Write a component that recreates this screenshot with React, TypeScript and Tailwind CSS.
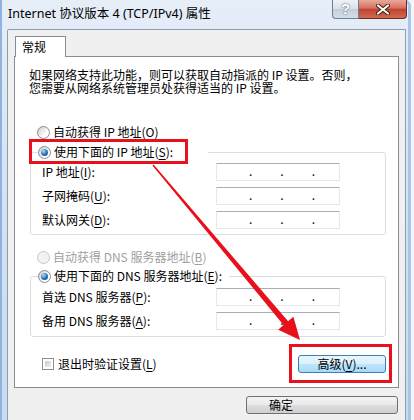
import type { ReactNode } from "react";

const Radio = ({ checked = false, disabled = false }: { checked?: boolean; disabled?: boolean }) => (
  <span
    className={
      disabled
        ? "flex h-[13px] w-[13px] shrink-0 items-center justify-center rounded-full border border-[#c9c9c9] bg-[#f2f2f2]"
        : "flex h-[13px] w-[13px] shrink-0 items-center justify-center rounded-full border border-[#8b8b8b] bg-[linear-gradient(135deg,#cdcdcd,#ffffff_70%)]"
    }
  >
    {checked && (
      <span className="h-[7px] w-[7px] rounded-full bg-[radial-gradient(circle_at_35%_30%,#a8e0fb,#2f79c2_50%,#0d3a6e)]" />
    )}
  </span>
);

const Option = ({
  checked,
  disabled,
  children,
}: {
  checked?: boolean;
  disabled?: boolean;
  children: ReactNode;
}) => (
  <div className={`flex h-[16px] items-center gap-[3px] ${disabled ? "text-[#a0a0a0]" : "text-black"}`}>
    <Radio checked={checked} disabled={disabled} />
    <span className="whitespace-nowrap leading-[16px]">{children}</span>
  </div>
);

const U = ({ c }: { c: string }) => (
  <span className="underline decoration-1 underline-offset-[2px]">{c}</span>
);

const IpField = () => (
  <div className="flex h-[18px] w-[124px] items-end border border-[#e3e9ef] border-t-[#abadb3] bg-white pb-[3px] text-[12px] leading-[12px] text-black">
    <span className="w-[32px]" />.<span className="w-[28px]" />.<span className="w-[28px]" />.
  </div>
);

const FieldRow = ({ label }: { label: ReactNode }) => (
  <div className="flex h-[18px] items-center">
    <span className="w-[174px] whitespace-nowrap">{label}</span>
    <IpField />
  </div>
);

const App = () => {
  return (
    <div className="relative h-[420px] w-[414px] overflow-hidden bg-[#f3f5f8] font-['Noto_Sans_CJK_SC','Noto_Sans',sans-serif] text-[12px] text-black">
      <div className="flex h-[420px] w-[411px] flex-col rounded-tr-[6px] bg-[linear-gradient(180deg,#e6eef8,#d6e4f3_40%,#c8dbf0)] shadow-[inset_2px_0_0_#8fb2df,inset_-3px_0_0_#a8c6ea]">
        {/* title bar */}
        <div className="flex h-[29px] items-start">
          <span className="pl-[8px] pt-[6px] font-['Noto_Sans','Noto_Sans_CJK_SC',sans-serif] text-[12.5px] leading-[16px] text-black">
            Internet 协议版本 4 (TCP/IPv4) 属性
          </span>
          <div className="ml-auto mr-[4px] flex">
            <div className="flex h-[19px] w-[27px] items-center justify-center rounded-bl-[4px] border border-t-0 border-[#6f7d90] bg-[linear-gradient(180deg,#eef3f8,#d7e0ea_50%,#c3cfdd_51%,#d3dde8)] font-['Liberation_Sans',sans-serif] text-[14px] font-bold leading-none text-white [text-shadow:0_0_2px_#3a4452]">
              ?
            </div>
            <div className="flex h-[19px] w-[48px] items-center justify-center rounded-br-[4px] border border-l-0 border-t-0 border-[#6b2a22] bg-[linear-gradient(180deg,#e9a99b,#d6705f_45%,#c0422f_52%,#d06a52)]">
              <svg width="14" height="11" viewBox="0 0 14 11">
                <path d="M2 1.5 L12 9.5 M12 1.5 L2 9.5" stroke="#3d1a15" strokeWidth="4" strokeLinecap="round" />
                <path d="M2 1.5 L12 9.5 M12 1.5 L2 9.5" stroke="#ffffff" strokeWidth="2.2" strokeLinecap="round" />
              </svg>
            </div>
          </div>
        </div>

        {/* client area */}
        <div className="ml-[7px] flex w-[399px] flex-1 flex-col rounded-tl-[2px] border-l border-r border-t border-[#8d9db1] bg-[#f0f0f0]">
          <div className="relative z-10 ml-[7px] mt-[6px] flex h-[21px] w-[51px] items-center border border-b-0 border-[#898c95] bg-white pl-[6px] leading-[14px]">
            常规
          </div>
          <div className="-mt-[1px] ml-[6px] flex h-[332px] w-[385px] flex-col border border-[#898c95] bg-white">
            <div className="pl-[14px] pt-[11px] leading-[13px]">
              <div className="whitespace-nowrap">如果网络支持此功能，则可以获取自动指派的 IP 设置。否则，</div>
              <div className="whitespace-nowrap">您需要从网络系统管理员处获得适当的 IP 设置。</div>
            </div>

            <div className="ml-[22px] mt-[30px]">
              <Option>
                自动获得 IP 地址(<U c="O" />)
              </Option>
            </div>

            <fieldset className="ml-[15px] mt-[4px] w-[356px] rounded-[3px] border border-[#d5dfe5] pb-[5px]">
              <legend className="ml-[7px] w-[170px]">
                <Option checked>
                  使用下面的 IP 地址(<U c="S" />):
                </Option>
              </legend>
              <div className="flex flex-col gap-[6px] pl-[11px] pt-[3px]">
                <FieldRow
                  label={
                    <>
                      IP 地址(<U c="I" />):
                    </>
                  }
                />
                <FieldRow
                  label={
                    <>
                      子网掩码(<U c="U" />):
                    </>
                  }
                />
                <FieldRow
                  label={
                    <>
                      默认网关(<U c="D" />):
                    </>
                  }
                />
              </div>
            </fieldset>

            <div className="ml-[22px] mt-[14px]">
              <Option disabled>
                自动获得 DNS 服务器地址(<U c="B" />)
              </Option>
            </div>

            <fieldset className="ml-[15px] mt-[3px] w-[356px] rounded-[3px] border border-[#d5dfe5] pb-[6px]">
              <legend className="ml-[7px] w-[191px]">
                <Option checked>
                  使用下面的 DNS 服务器地址(<U c="E" />):
                </Option>
              </legend>
              <div className="flex flex-col gap-[6px] pl-[11px] pt-[4px]">
                <FieldRow
                  label={
                    <>
                      首选 DNS 服务器(<U c="P" />):
                    </>
                  }
                />
                <FieldRow
                  label={
                    <>
                      备用 DNS 服务器(<U c="A" />):
                    </>
                  }
                />
              </div>
            </fieldset>

            <div className="mt-[18px] flex h-[18px] items-center pl-[27px] pr-[12px]">
              <span className="h-[12px] w-[12px] border border-[#8f8f8f] bg-white p-[2px]">
                <span className="block h-full w-full bg-[linear-gradient(135deg,#c9c9c9,#f2f2f2)]" />
              </span>
              <span className="ml-[4px] whitespace-nowrap">
                退出时验证设置(<U c="L" />)
              </span>
              <div className="ml-auto flex h-[18px] w-[88px] items-center justify-center rounded-[3px] border border-[#3c7fb1] bg-[linear-gradient(180deg,#eaf6fd,#d9f0fc_50%,#bee6fd_51%,#a7d9f5)] leading-[14px]">
                高级(<U c="V" />)...
              </div>
            </div>
          </div>

          <div className="ml-[238px] mt-[8px] flex h-[18px] w-[152px] items-center rounded-[3px] border border-[#707070] bg-[linear-gradient(180deg,#f2f2f2,#ebebeb_50%,#dddddd_51%,#cfcfcf)] pl-[22px] leading-[14px]">
            确定
          </div>
        </div>
      </div>

      {/* annotations */}
      <div className="pointer-events-none absolute left-[29px] top-[139px] h-[25px] w-[159px] border-[3px] border-[#e8101a]" />
      <div className="pointer-events-none absolute left-[289px] top-[344px] h-[39px] w-[103px] border-[3px] border-[#e8101a]" />
      <svg className="pointer-events-none absolute left-0 top-0" width="414" height="420" viewBox="0 0 414 420">
        <polygon
          points="153.6,164.5 288.1,321.3 293.4,316.7 300,340 278.2,329.7 283.5,325.1 152.4,165.5"
          fill="#e8101a"
        />
      </svg>
    </div>
  );
};

export default App;
